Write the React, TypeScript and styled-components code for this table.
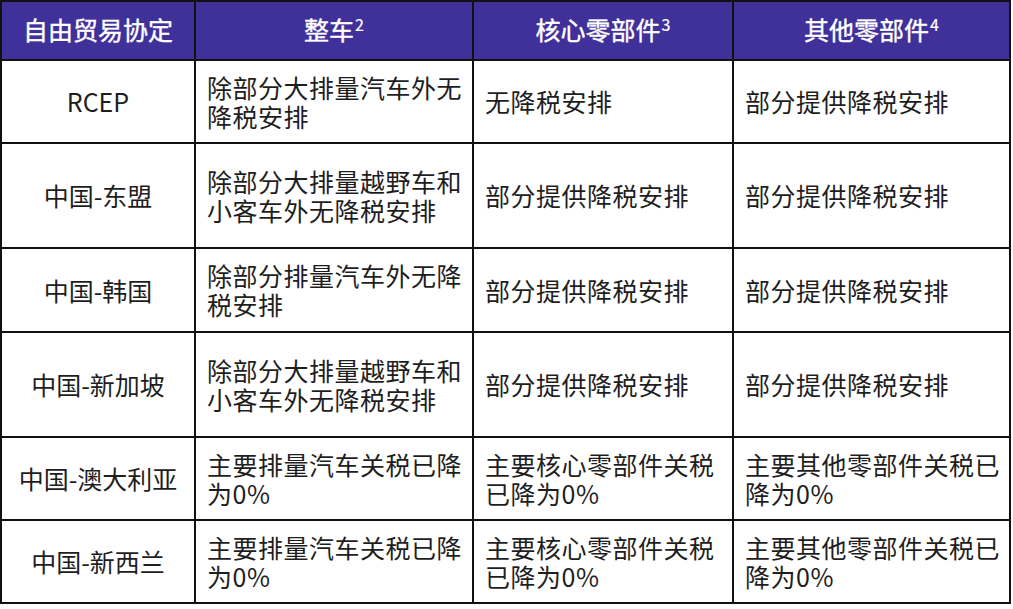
import styled, { createGlobalStyle } from "styled-components";

const GlobalStyle = createGlobalStyle`
	html, body {
		margin: 0;
		padding: 0;
		background: #ffffff;
	}
	body {
		font-family: "Noto Sans CJK SC", "Noto Sans", sans-serif;
	}
`;

const Table = styled.div`
	display: grid;
	grid-template-columns: 194px 278px 260px 277px;
	grid-template-rows: 59px 83px 105px 84px 105px 83px 83px;
	width: 1009px;
	border-left: 2px solid #111;
	border-top: 2px solid #111;
`;

const Cell = styled.div<{ $center?: boolean; $head?: boolean }>`
	display: flex;
	align-items: center;
	justify-content: ${(p) => (p.$center ? "center" : "flex-start")};
	text-align: ${(p) => (p.$center ? "center" : "left")};
	padding: ${(p) => (p.$center ? "0" : "0 8px 0 11px")};
	border-right: 2px solid #111;
	border-bottom: 2px solid #111;
	background: ${(p) => (p.$head ? "#40309a" : "#ffffff")};
	color: ${(p) => (p.$head ? "#ffffff" : "#1e1e1e")};
	font-size: 25px;
	font-weight: 400;
	line-height: 29px;
	letter-spacing: ${(p) => (p.$center ? "0" : "0.5px")};
	white-space: nowrap;
	padding-bottom: ${(p) => (p.$head ? "2px" : "0")};
	-webkit-text-stroke: ${(p) => (p.$head ? "0.4px #ffffff" : "0")};
`;

const Sup = styled.span`
	font-size: 16px;
	line-height: 16px;
	align-self: flex-start;
	margin-top: 14px;
	margin-left: 1px;
	-webkit-text-stroke: 0.2px #ffffff;
`;

const Lines = styled.div`
	display: flex;
	flex-direction: column;
`;

type Row = { name: string; car: string[]; core: string[]; other: string[] };

const rows: Row[] = [
	{ name: "RCEP", car: ["除部分大排量汽车外无", "降税安排"], core: ["无降税安排"], other: ["部分提供降税安排"] },
	{ name: "中国-东盟", car: ["除部分大排量越野车和", "小客车外无降税安排"], core: ["部分提供降税安排"], other: ["部分提供降税安排"] },
	{ name: "中国-韩国", car: ["除部分排量汽车外无降", "税安排"], core: ["部分提供降税安排"], other: ["部分提供降税安排"] },
	{ name: "中国-新加坡", car: ["除部分大排量越野车和", "小客车外无降税安排"], core: ["部分提供降税安排"], other: ["部分提供降税安排"] },
	{ name: "中国-澳大利亚", car: ["主要排量汽车关税已降", "为0%"], core: ["主要核心零部件关税", "已降为0%"], other: ["主要其他零部件关税已", "降为0%"] },
	{ name: "中国-新西兰", car: ["主要排量汽车关税已降", "为0%"], core: ["主要核心零部件关税", "已降为0%"], other: ["主要其他零部件关税已", "降为0%"] },
];

function Text({ lines }: { lines: string[] }) {
	return (
		<Lines>
			{lines.map((l) => (
				<span key={l}>{l}</span>
			))}
		</Lines>
	);
}

export default function App() {
	return (
		<>
			<GlobalStyle />
			<Table>
				<Cell $head $center>自由贸易协定</Cell>
				<Cell $head $center>
					整车<Sup>2</Sup>
				</Cell>
				<Cell $head $center>
					核心零部件<Sup>3</Sup>
				</Cell>
				<Cell $head $center>
					其他零部件<Sup>4</Sup>
				</Cell>
				{rows.map((r) => (
					<>
						<Cell key={r.name} $center>{r.name}</Cell>
						<Cell>
							<Text lines={r.car} />
						</Cell>
						<Cell>
							<Text lines={r.core} />
						</Cell>
						<Cell>
							<Text lines={r.other} />
						</Cell>
					</>
				))}
			</Table>
		</>
	);
}
